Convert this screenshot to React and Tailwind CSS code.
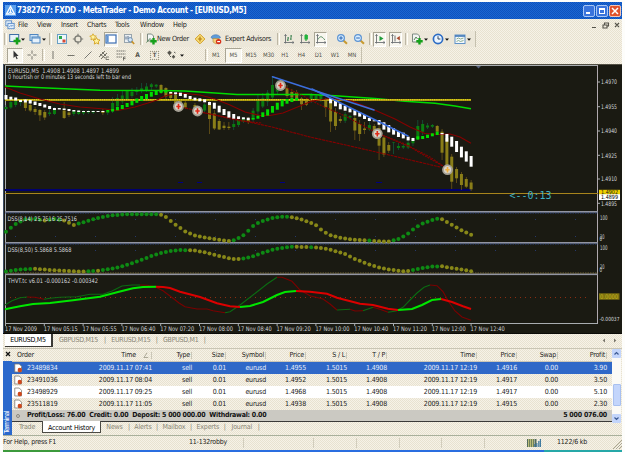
// File: App.jsx
// Description: MetaTrader terminal window with the EURUSD chart and the account history.

import React from 'react';

const BAR = 4.845;
const barX = (i) => 6 + i * BAR;

// [first bar, colour, [top, height] per bar]
const smoothed = [
  [0, '#ffffff', [[95, 4.5], [96.7, 3], [97.5, 3], [100, 2], [99.5, 3], [100, 3.5], [101.5, 3.5], [103, 3], [104.5, 3], [106, 3], [108, 2], [108, 1.5], [108.5, 1.5], [109, 2], [110, 1.5], [110.5, 1.5], [111, 1], [111, 1], [111, 1], [111, 1], [111, 1]]],
  [21, '#00dc00', [[110, 1.7], [109, 2.5], [107, 3.3], [105, 4], [103, 4], [101, 4.3], [98.5, 4.3], [96, 5], [94, 5], [92, 4.7], [91, 4], [90.3, 2.7], [90.7, 2]]],
  [34, '#ffffff', [[92, 1.5], [92.3, 2], [92.7, 3.3], [94, 3.7], [96, 3], [97.7, 2.7], [98.3, 3], [99.3, 3], [102, 3], [102.7, 6], [105.7, 6.7], [109, 6], [111.3, 6.3], [114, 4.7], [116.3, 2.7], [117.3, 2], [117.7, 2.3]]],
  [51, '#00dc00', [[118, 1.3], [115.7, 3], [112.3, 4.7], [109.3, 6.3], [106, 6.7], [102.7, 7], [99.7, 6.7], [99, 4.7], [98, 4], [98, 2.7]]],
  [67, '#ffffff', [[98.3, 5], [100.3, 6], [103.3, 6], [106, 4.7], [108.3, 4], [110.3, 5], [112.3, 4.3], [115, 4], [118, 3], [120.3, 1], [120, 4.7], [122.3, 7.3], [125, 7.3], [128.3, 6.3], [131, 6], [132.7, 5.7], [136.7, 3.7], [138, 3]]],
  [85, '#00dc00', [[136.3, 3.3], [136, 3], [134.7, 3.3], [133.3, 3], [131.7, 3.3]]],
  [90, '#ffffff', [[133, 1.3], [134, 7.7], [136.7, 10], [141, 11], [146.7, 10.7], [151.3, 10.3], [156, 10.7]]],
];

// [bar, open, close, high, low, up]
const candles = [
  [0, 107, 109, 105, 110, 1], [1, 102, 107.5, 101, 109, 1], [2, 100.5, 105, 99, 107, 1], [3, 100, 102.5, 99, 106, 1],
  [4, 101.5, 108, 100, 111, 0], [5, 105, 110.5, 102, 112, 0], [6, 109, 112, 107, 115, 0], [7, 110, 115.3, 109, 121, 0],
  [8, 112, 117.5, 110, 120, 0], [9, 112.5, 114, 109, 116, 1], [10, 109, 114, 107, 115, 1], [12, 110.5, 118, 102, 119, 0],
  [13, 112.5, 115, 111, 117, 0], [14, 111, 114, 110, 116, 1], [15, 111, 114, 110, 115, 1], [16, 111, 113.3, 110, 115, 1],
  [17, 111, 112.5, 110, 114, 1], [18, 111, 112.5, 110, 114, 1], [20, 111, 113, 109, 115, 0], [21, 111, 113, 110, 115, 1],
  [22, 103, 111, 97, 113, 1], [23, 98, 106.5, 94, 110, 1], [24, 95.5, 101.5, 91, 104, 1], [25, 91, 99, 90, 101, 1],
  [26, 92, 96, 88, 98, 1], [27, 90, 92, 87, 95, 1], [28, 88.3, 90.7, 83, 93, 1], [29, 86.5, 90, 83, 92, 1],
  [30, 84.3, 87, 83, 90, 1], [31, 84.7, 86.5, 84, 88, 1], [32, 85, 92, 84, 94, 0], [33, 88, 96.5, 87, 101, 0],
  [34, 93, 98, 91, 101, 0], [35, 95, 103, 93, 106, 0], [36, 101, 108, 99, 110, 0], [37, 102.7, 107.5, 100, 109, 0],
  [39, 105, 107, 103, 109, 0], [41, 104.5, 110.5, 103, 113, 1], [42, 103.5, 119, 100, 134, 0], [43, 113.5, 128.5, 110, 130, 0],
  [44, 121, 129.5, 119, 130, 0], [45, 125.7, 128, 122, 130, 0], [46, 126.7, 128, 122, 130, 0], [47, 124, 127, 119, 130, 1],
  [48, 120, 125, 118, 127, 1], [49, 119, 121.5, 117, 123, 1], [50, 119.7, 122, 117, 124, 0], [51, 110.7, 120, 108, 122, 1],
  [52, 100, 111.5, 95, 117, 1], [53, 98.3, 106.5, 93, 108, 1], [54, 92.7, 101.5, 90, 106, 1], [55, 85, 97.5, 76, 99, 1],
  [56, 82.5, 91.5, 80, 94, 1], [58, 88, 96, 85, 98, 0], [59, 92, 97.5, 89, 99, 0], [60, 92.5, 99, 90, 100, 0],
  [61, 98.5, 104.3, 97, 110, 0], [62, 100.5, 104.7, 98, 106, 0], [63, 95, 100, 93, 103, 1], [64, 96, 99.3, 95, 102, 1],
  [65, 95.5, 99, 94, 102, 1], [66, 99, 107.5, 98, 117, 0], [67, 103, 121.5, 101, 132, 0], [68, 112, 126, 108, 130, 0],
  [69, 119, 121, 116, 123, 0], [70, 114.3, 120.7, 112, 123, 1], [71, 116, 117.5, 115, 119, 1], [72, 118, 130.5, 115, 140, 0],
  [73, 124, 134, 120, 141, 0], [74, 128.5, 130, 122, 134, 0], [75, 125, 129.5, 121, 131, 1], [76, 126, 131.5, 124, 134, 0],
  [77, 128, 145.7, 120, 160, 0], [78, 137.5, 154.5, 135, 157, 0], [79, 145, 150.7, 142, 153, 0], [80, 142, 142.5, 142, 154, 1],
  [81, 146, 148, 143, 150, 1], [82, 146, 147.5, 143, 149, 1], [83, 142.7, 147.5, 139, 149, 1], [84, 140, 143.3, 137, 146, 1],
  [85, 126, 139, 120, 140, 1], [86, 124, 131.7, 120, 135, 1], [87, 125.5, 127.5, 123, 129, 1], [88, 125, 126.7, 124, 128, 1],
  [89, 126, 131.7, 125, 134, 0], [90, 131.7, 152.7, 129, 160, 0], [91, 138, 171.7, 136, 175, 0], [92, 156.7, 181.7, 154, 189, 0],
  [93, 169, 178.3, 167, 183, 0], [94, 174, 185, 172, 190, 0], [95, 179, 186.7, 177, 188, 0], [96, 182.5, 189.3, 180, 191, 0],
];

const dss1 = [[6, 231.7], [15, 224.3], [25, 219.3], [35, 219], [45, 220.5], [54, 219], [64, 220.5], [73.5, 225], [83, 222.3], [98, 218], [112, 215.3], [127, 214.3], [160, 214.3], [165.5, 216.7], [175, 224.3], [185, 231.3], [195, 235.5], [209, 238.3], [223, 240.3], [228, 241], [233, 240.7], [238, 238.3], [243, 235.7], [248, 231], [252, 226.7], [257, 223.3], [262, 221.3], [272, 218], [282, 216.7], [291, 217], [301, 219.3], [311, 223], [316, 225.3], [320, 229], [325, 232.3], [330, 235], [340, 237.7], [354, 239.7], [388, 241.7], [398, 239.3], [403, 236.7], [408, 233.7], [412, 230.3], [417, 226.7], [422, 223.7], [432, 220], [437, 218.7], [442, 219.3], [451, 224.3], [461, 230], [471, 234.7]];
const dss1Falling = [[44, 49], [60, 75], [160, 230], [290, 366], [371, 390], [440, 480]];
const dss2 = [[6, 271.5], [20, 269.5], [35, 268.7], [50, 270], [80, 271.5], [97, 271], [107, 269.5], [120, 267], [130, 264], [140, 260.5], [150, 256.5], [160, 253.3], [170, 251], [180, 250], [195, 250.5], [208, 253], [219, 256], [228, 258], [235, 259.3], [245, 258.3], [255, 255.7], [262, 253], [275, 249], [290, 246.7], [305, 247], [318, 247.5], [330, 249.5], [345, 254], [355, 259], [365, 263], [377, 267], [387, 269.3], [405, 271.5], [418, 269], [430, 266.7], [442, 266.3], [450, 267.7], [465, 270], [471, 271.3]];
const dss2Falling = [[33, 84], [95, 99], [186, 240], [294, 308], [313, 410], [440, 480]];

const valueAt = (points, x) => {
  const n = points.findIndex((p) => p[0] >= x);
  if (n === -1) return points[points.length - 1][1];
  if (n === 0) return points[0][1];
  const [x1, y1] = points[n - 1];
  const [x2, y2] = points[n];
  return y1 + ((y2 - y1) * (x - x1)) / (x2 - x1);
};

const Dots = ({ points, falling }) => (
  <g>
    {Array.from({ length: 97 }, (_, i) => {
      const x = barX(i);
      const down = falling.some(([a, b]) => x >= a && x <= b);
      return <circle key={i} cx={x} cy={valueAt(points, x)} r="2" fill={down ? '#878718' : '#0e8a14'} />;
    })}
  </g>
);

const thinLines = [
  ['#0b6b12', '5,305 12,300.7 20,297.7 27,297'],
  ['#7a0000', '27,297 35,297.3 44,299.3'],
  ['#0b6b12', '44,299.3 50,298.3 60,297.3 77,296.7 90,294.3 103,294.3 112,291 122,286 132,285 140,285'],
  ['#7a0000', '140,285 147,285.3 155,286.7 163,290.7 173,298.3 179,303 185,306.7 197,309 207,309 213,310.7 225,312.7'],
  ['#0b6b12', '225,312.7 230,311.7 240,305 253,295 267,284 277,277.3'],
  ['#7a0000', '277,277.3 282,277.3 292,281.3 300,290 310,295.7 323,299 330,304 337,310'],
  ['#0b6b12', '337,310 350,309.3'],
  ['#7a0000', '350,309.3 355,311 363,310.7'],
  ['#0b6b12', '363,310.7 373,307.3'],
  ['#7a0000', '373,307.3 380,309.3 388,312.3'],
  ['#0b6b12', '388,312.3 396,311 403,307.3 411,299 417,293 424,287.3 430,285'],
  ['#7a0000', '430,285 437,285.7 443,291.7 449,302.3 455,311 462,317 471,320.3'],
];

const thickLines = [
  ['#00e600', '5,309.3 20,306.3 33,304 50,303 73,300.3 100,296.7 117,292.3 133,288.3 143,287 156,286.7'],
  ['#dc0000', '156,286.7 163,287 170,288 180,291.7 200,297 217,303.3 230,306.3 240,307'],
  ['#00e600', '240,307 250,306 263,302 277,295 285,292 296,291'],
  ['#dc0000', '296,291 310,291.7 327,293.7 337,297.7 360,303.7 373,305 388,308.7 398,310'],
  ['#00e600', '398,310 412,309 422,305 432,300 441,299'],
  ['#dc0000', '441,299 452,302 463,306.3 471,309'],
];

const times = ['2009', '05:15', '05:55', '06:40', '07:20', '08:00', '08:40', '09:20', '10:00', '10:40', '11:20', '12:00', '12:40'];
const prices = [['1.4970', 82], ['1.4955', 106.7], ['1.4940', 131], ['1.4925', 155.3], ['1.4910', 179], ['1.4895', 203.3]];
const marks = [[178.5, 106.5], [197.5, 111], [280.5, 85.5], [377.3, 133.7], [447.5, 169.7]];

const Label = ({ x, y, w, children, fill = '#d6d8dc', size = 6.3 }) => (
  <text x={x} y={y} fontSize={size} fill={fill} textLength={w} lengthAdjust="spacingAndGlyphs" xmlSpace="preserve">
    {children}
  </text>
);

const Chart = () => (
  <svg viewBox="3 64 619 270" className="block h-[270px] w-[619px] shrink-0 font-['DejaVu_Sans_Condensed','DejaVu_Sans',sans-serif]">
    <rect x="3" y="64" width="619" height="270" fill="#1a1a12" />
    <rect x="3" y="63.5" width="619" height="1" fill="#8a8474" />
    <rect x="3" y="64" width="1" height="270" fill="#3a4a62" />
    <rect x="5" y="65" width="593" height="1" fill="#a9adb0" />
    <rect x="5" y="65" width="1" height="259" fill="#a9adb0" />
    <rect x="597" y="65" width="1" height="259" fill="#b0a9ae" />

    {/* pane separators */}
    {[211, 242, 273.5].map((y, i) => (
      <g key={y}>
        <rect x="5" y={y} width="593" height="1.6" fill="#9295a2" />
        <line x1="5" x2="598" y1={i === 2 ? y - 0.5 : y + 2} y2={i === 2 ? y - 0.5 : y + 2} stroke={i === 2 ? '#8c7a3c' : '#34519a'} strokeWidth="0.8" strokeDasharray="1.5 1" />
      </g>
    ))}
    <rect x="5" y="323" width="593" height="1" fill="#a9adb0" />
    <rect x="3" y="333" width="619" height="1" fill="#0b0b08" />

    {/* price lines */}
    <rect x="5" y="189" width="466" height="2" fill="#00006e" />
    <rect x="5" y="193" width="593" height="1" fill="#a8851c" />
    <path d="M178 182.5h5M197 182.5h5M280 182.5h5M376 182.5h6" stroke="#000080" strokeWidth="1.2" />

    <g>
      {candles.map(([i, open, close, high, low, up]) => (
        <g key={i} fill={up ? '#0a7c10' : '#8a7e18'}>
          <rect x={barX(i) - 0.4} y={high} width="0.8" height={low - high} fill={up ? '#14543c' : '#6b5518'} />
          <rect x={barX(i) - 1.5} y={open} width="3" height={close - open} />
        </g>
      ))}
    </g>

    <polyline points="5,86 30,87.3 70,89 100,90.3 135,90.5 160,90.5 185,91 215,93 237,94.5 310,94.5 335,95.7 375,98.5 405,101.3 435,103.3 455,106 471,108.7" fill="none" stroke="#00dc00" strokeWidth="1.4" />
    <rect x="5" y="99" width="466" height="2" fill="#a08c10" />
    <line x1="5" x2="471" y1="99.8" y2="99.8" stroke="#f0e61c" strokeWidth="1.1" strokeDasharray="1.4 0.8" />
    <g fill="none" stroke="#860000" strokeWidth="1.1">
      <polyline points="5,87 20,93 40,99 60,104 80,107 105,109 118,110.5 135,107 148,103 157,100 165,96 175,93.5 185,93.5 200,95 215,99 230,105 245,112 260,115.5 270,115.5 283,113 300,106 312,101 330,98.5 352,101 374,109.7 395,119 410,127 425,133.5 440,134.5 450,134 460,137 471,143.3" />
      <polyline points="178,106 205,113 235,119 272,127 310,137 350,146 385,154 440,167" strokeDasharray="3 0.7" />
      <polyline points="197,111 240,121 262,123" strokeDasharray="2 1" />
      <polyline points="285,87 305,97 318,104 345,116 377,133 410,147 446,168" strokeDasharray="2 1" />
      <polyline points="377,133 405,144 430,157 446,168" strokeDasharray="2 1" />
    </g>

    {smoothed.map(([start, color, bars]) =>
      bars.map(([top, height], k) => (
        <rect key={start + k} x={barX(start + k) - 1.5} y={top} width="3" height={height} fill={color} />
      ))
    )}

    <g stroke="#3c6edc" strokeWidth="1.6" strokeLinecap="round">
      <line x1="272.5" y1="76.7" x2="374" y2="110" />
      <line x1="312" y1="89" x2="408" y2="136" />
    </g>

    {marks.map(([x, y]) => (
      <g key={x}>
        <circle cx={x} cy={y} r="5.4" fill="#a5a094" />
        <circle cx={x} cy={y} r="3.6" fill="#d9d4c8" />
        <path d={`M${x - 2.2} ${y}h4.4M${x} ${y - 2.8}v5.6`} stroke={x > 440 ? '#f0b040' : '#e02818'} strokeWidth="1.6" />
      </g>
    ))}

    {/* indicators */}
    <path d="M15 219.5h580M15 236.5h580M15 250.5h580" stroke="#26386c" strokeWidth="1" strokeDasharray="1 39" />
    <line x1="10" x2="590" y1="297.5" y2="297.5" stroke="#8c2c10" strokeWidth="1" strokeDasharray="1 4" />
    <Dots points={dss1} falling={dss1Falling} />
    <Dots points={dss2} falling={dss2Falling} />
    {thinLines.map(([color, points]) => (
      <polyline key={points} points={points} fill="none" stroke={color} strokeWidth="1.1" />
    ))}
    {thickLines.map(([color, points]) => (
      <polyline key={points} points={points} fill="none" stroke={color} strokeWidth="2" />
    ))}

    <Label x={8} y={73} w={111}>EURUSD,M5  1.4908 1.4908 1.4897 1.4899</Label>
    <Label x={8} y={79.3} w={123}>0 hourtish or 0 minutes 13 seconds left to bar end</Label>
    <Label x={7.5} y={221.3} w={69.5}>DSS(8,14) 25.7516 25.7516</Label>
    <Label x={7.5} y={252.3} w={64}>DSS(8,50) 5.5868 5.5868</Label>
    <Label x={8} y={282.5} w={90}>THVT.tc v6.01 -0.000162 -0.000342</Label>
    <text x="509.5" y="199" fontSize="10" fill="#3fb4c4" textLength="42" lengthAdjust="spacingAndGlyphs" className="font-['DejaVu_Sans_Mono','Liberation_Mono',monospace]">
      {'<--0:13'}
    </text>

    {/* price axis */}
    {prices.map(([text, y]) => (
      <g key={text}>
        <rect x="598" y={y - 0.5} width="2" height="1" fill="#a9adb0" />
        <Label x={601} y={y + 2.2} w={16}>{text}</Label>
      </g>
    ))}
    <rect x="599" y="189.8" width="21" height="5" fill="#f0d000" />
    <Label x={601} y={194.4} w={17} fill="#1a1a12" size={5.8}>1.4902</Label>
    <rect x="599" y="194.2" width="21" height="5.8" fill="#ffffff" />
    <Label x={601} y={199.2} w={17} fill="#000000" size={5.8}>1.4899</Label>
    <path d="M476 66h5l-2.5 2.5z" fill="#57627c" />
    <Label x={600} y={219.8} w={7.5}>100</Label>
    <Label x={600} y={238.8} w={4.5}>20</Label>
    <Label x={599.5} y={241} w={2.6}>0</Label>
    <Label x={600} y={250.3} w={7.5}>100</Label>
    <Label x={600} y={269} w={4.5}>20</Label>
    <Label x={599.5} y={271.5} w={2.6}>0</Label>
    <rect x="599" y="293.3" width="20.5" height="6.4" fill="#7f7410" />
    <Label x={600} y={298.8} w={18} fill="#c0b020">0.0000</Label>
    <Label x={599.5} y={321} w={20} size={5.6}>-0.00037</Label>

    {/* time axis */}
    {times.map((time, i) => (
      <g key={time}>
        <rect x={5 + i * 38.8} y="324" width="1" height="2" fill="#a9adb0" />
        <Label x={5 + i * 38.8} y={331} w={i === 0 ? 32 : 34}>{`17 Nov ${time}`}</Label>
      </g>
    ))}
  </svg>
);

const Icon = ({ children }) => (
  <svg viewBox="0 0 12 12" className="h-3 w-3 shrink-0" fill="none" strokeWidth="1">
    {children}
  </svg>
);

const Plus = () => <path d="M8.5 5v6.4M5.3 8.2h6.4" stroke="#16a01a" strokeWidth="2.4" />;

const Caret = () => (
  <span className="flex w-1 shrink-0 justify-center">
    <svg viewBox="0 0 4 3" className="h-[3px] w-1"><path d="M0 .5h4L2 2.8z" fill="#111" /></svg>
  </span>
);

const Grip = ({ className }) => (
  <span className={`flex shrink-0 items-center justify-center gap-px ${className}`}>
    <span className="h-3 w-px bg-[#bdb7a5]" />
    <span className="h-3 w-px bg-[#fffef8]" />
  </span>
);

const Tool = ({ className, pressed, children }) => (
  <span
    className={`flex shrink-0 items-center justify-center ${className} ${
      pressed ? 'h-[15px] border border-t-[#a9a594] border-l-[#a9a594] border-r-white border-b-white bg-[#f8f6ee]' : 'h-4'
    }`}
  >
    {children}
  </span>
);

const Axes = () => <path d="M2.5 1.5v9M1 9.5h10M1.5 3l1-1.5 1 1.5M9.5 8.5l1.5 1-1.5 1" stroke="#6c7074" strokeWidth=".9" />;

const MainToolbar = () => (
  <div className="flex h-4 w-[473px] shrink-0 items-center border-r border-[#c5c0ae] bg-[#ece7d9]">
    <Grip className="w-[5px]" />
    <Tool className="w-[13px]">
      <Icon><rect x=".7" y="1.5" width="9" height="7" fill="#e8f2fa" stroke="#3f6fa6" /><path d="M8 4.5v7M4.5 8h7" stroke="#16a01a" strokeWidth="2.6" /></Icon>
    </Tool>
    <Caret />
    <Tool className="ml-[3px] w-[14px]">
      <Icon><rect x="1" y="1.5" width="8" height="6" fill="#cfe4f6" stroke="#4f86c0" /><rect x="3" y="4" width="8" height="6" fill="#e6f2fc" stroke="#4f86c0" /><path d="M3 5h8" stroke="#4f86c0" /></Icon>
    </Tool>
    <Caret />
    <Grip className="ml-px w-[7px]" />
    <Tool className="w-[15px]">
      <Icon><rect x="1.5" y="1.5" width="9" height="9" fill="#eef6fb" stroke="#6aa0c4" /><path d="M3 3h3v3H3z" fill="#2aa84a" /><path d="M6.5 6.5h3v3h-3z" fill="#d84a34" /></Icon>
    </Tool>
    <Tool className="w-[17px]">
      <Icon><circle cx="6" cy="6" r="3.2" stroke="#7d7d76" strokeWidth="1.3" /><path d="M6 .8v3M6 8.2v3M.8 6h3M8.2 6h3" stroke="#7d7d76" strokeWidth="1.2" /></Icon>
    </Tool>
    <Tool className="w-[17px]">
      <Icon><path d="M4 .8l1 2 2.3.3-1.6 1.6.3 2.2-2-1-2 1 .3-2.2L.8 3.1 3 2.8z" fill="#fff3a0" stroke="#d2a01c" strokeWidth=".8" /><path d="M7.5 4.5l1.1 2.2 2.4.3-1.7 1.7.4 2.4-2.2-1.2-2.2 1.2.4-2.4L4 7l2.4-.3z" fill="#fff3a0" stroke="#d2a01c" strokeWidth=".9" /></Icon>
    </Tool>
    <Tool className="ml-px w-[14px]" pressed>
      <Icon><rect x="1" y="2" width="10" height="8" fill="#fff" stroke="#3c6eb4" strokeWidth="1.2" /><path d="M1.5 2.5h2.2v7H1.5z" fill="#5f93d2" /></Icon>
    </Tool>
    <Tool className="ml-px w-[20px]">
      <Icon><rect x="1.5" y="1.5" width="7" height="8" fill="#e9eef2" stroke="#98a4ac" /><path d="M3 3.5v3M5 3v3" stroke="#58708c" /><circle cx="7.2" cy="6.8" r="2.2" fill="#d4e6f6" stroke="#6d8cac" /><path d="M8.8 8.4l2.4 2.6" stroke="#c89228" strokeWidth="1.6" /></Icon>
    </Tool>
    <Grip className="w-[5px]" />
    <Tool className="w-[13px]">
      <Icon><path d="M2.5 1h4l2 2v5h-6z" fill="#f4f6f4" stroke="#7d8a80" /><path d="M1.5 9.5L5 5.5l2 2" stroke="#58885c" /><Plus /></Icon>
    </Tool>
    <span className="w-[35px] shrink-0 text-[7.2px] tracking-[-0.3px]">New Order</span>
    <Tool className="w-[15px]">
      <Icon><path d="M6 1.2L10.8 6 6 10.8 1.2 6z" fill="#fbe27c" stroke="#d09a20" /><path d="M6 3.5v5M3.8 6h4.4" stroke="#b47a10" strokeWidth="1.2" /></Icon>
    </Tool>
    <Tool className="w-[18px]">
      <Icon><path d="M1 4.5C2 1 9 .6 10.5 4.5L8 6H3z" fill="#5f9cd8" stroke="#3f76b4" strokeWidth=".6" /><path d="M3 5.5h6V9L6 11 3 9z" fill="#f2cf7a" stroke="#b48a3c" strokeWidth=".6" /><circle cx="8.6" cy="8.6" r="2.7" fill="#d8321c" /><path d="M7.2 8.6H10" stroke="#fff" strokeWidth="1.2" /></Icon>
    </Tool>
    <span className="w-[50px] shrink-0 text-[7.2px] tracking-[-0.3px]">Expert Advisors</span>
    <Grip className="w-[6px]" />
    <Tool className="w-[15px]"><Icon><Axes /><path d="M5 4v4M4 7h1M5 5h1M8 2v5M7 6h1M8 3h1" stroke="#3d8250" /></Icon></Tool>
    <Tool className="ml-px w-[15px]"><Icon><Axes /><path d="M7 1v7" stroke="#188828" /><path d="M5.5 2h3.4v4.5H5.5z" fill="#22b43c" /></Icon></Tool>
    <Tool className="ml-0.5 w-[13px]" pressed><Icon><Axes /><path d="M3 6.5C5 2.5 7 3 9.8 7" stroke="#5c9068" /></Icon></Tool>
    <Tool className="ml-[7px] w-4"><Icon><path d="M7.5 7.5l3.5 3.3" stroke="#c89a30" strokeWidth="2" /><circle cx="5" cy="5" r="3.4" fill="#d7ecff" stroke="#5d94d2" strokeWidth="1.2" /><path d="M3.2 5h3.6M5 3.2v3.6" stroke="#2664b4" /></Icon></Tool>
    <Tool className="w-[17px]"><Icon><path d="M7.5 7.5l3.5 3.3" stroke="#c89a30" strokeWidth="2" /><circle cx="5" cy="5" r="3.4" fill="#d7ecff" stroke="#5d94d2" strokeWidth="1.2" /><path d="M3.2 5h3.6" stroke="#2664b4" /></Icon></Tool>
    <Grip className="w-[6px]" />
    <Tool className="w-[13px]" pressed><Icon><Axes /><path d="M5.5 3l4 2.5-4 2.5z" fill="#1f9c3a" /></Icon></Tool>
    <Tool className="ml-[3px] w-[13px]" pressed><Icon><Axes /><path d="M5 2.5v6" stroke="#6c7074" /><path d="M9.8 3v4.4L6.5 5.2z" fill="#a8482c" /></Icon></Tool>
    <Grip className="w-2" />
    <Tool className="w-[14px]"><Icon><path d="M1.5 1h5l2 2v6h-7z" fill="#f1f3f1" stroke="#7d8a80" /><path d="M3 7l2-3 1.5 2" stroke="#58885c" /><Plus /></Icon></Tool>
    <Caret />
    <Tool className="ml-[3px] w-[14px]"><Icon><circle cx="6" cy="6" r="4.6" fill="#eaf4ff" stroke="#2c6cc4" strokeWidth="1.7" /><path d="M6 3.2V6h2.4" stroke="#33475f" /></Icon></Tool>
    <Caret />
    <Tool className="ml-[3px] w-[15px]"><Icon><rect x="1" y="2" width="10" height="8.5" fill="#f4f8fc" stroke="#5f92c8" /><path d="M1 3h10" stroke="#3f78b8" strokeWidth="1.6" /><path d="M2.5 6l2-1 2 1 3-1M2.5 8.5l2-1 2 1 3-1" stroke="#6f9c74" strokeWidth=".8" /></Icon></Tool>
    <Caret />
  </div>
);

const DrawToolbar = () => (
  <div className="flex h-4 w-[359px] shrink-0 items-center border-r border-[#c5c0ae] text-[6px] tracking-[-0.1px] text-[#55544c]">
    <Tool className="ml-1 w-4" pressed><Icon><path d="M4.5 1.5v7.4l1.8-1.6 1.3 3 1.1-.5-1.3-2.9h2.2z" fill="#333" /></Icon></Tool>
    <Tool className="w-[18px]"><Icon><path d="M6 1.5v3.3M6 7.2v3.3M1.5 6h3.3M7.2 6h3.3" stroke="#76756c" /></Icon></Tool>
    <Grip className="w-[5px]" />
    <Tool className="w-[13px]"><Icon><path d="M6 2v8" stroke="#76756c" /></Icon></Tool>
    <Tool className="ml-[3px] w-[17px]"><Icon><path d="M2.5 6.5h7" stroke="#76756c" /></Icon></Tool>
    <Tool className="w-[17px]"><Icon><path d="M2.5 9.5l7-7" stroke="#76756c" /></Icon></Tool>
    <Tool className="w-[16px]"><Icon><path d="M1 8l6-6M3 10l6-6M2 5l5 4M4 3l4 4" stroke="#66655c" strokeWidth=".9" /><path d="M8 8h3M8 10.5h3M8 8v2.5" stroke="#66655c" strokeWidth=".8" /></Icon></Tool>
    <Tool className="w-[17px]"><Icon><path d="M1.5 2h9M1.5 5h9M1.5 8h6" stroke="#76756c" strokeDasharray="1.5 .5" /><path d="M8.5 8v3.5M8.5 8h2M8.5 9.6h2" stroke="#55544c" strokeWidth=".8" /></Icon></Tool>
    <Tool className="w-[17px] text-[6.6px] font-bold">A</Tool>
    <Tool className="w-[17px]"><span className="flex h-[9px] w-[9px] items-center justify-center border border-dotted border-[#999585] text-[6px] font-bold">T</span></Tool>
    <Tool className="ml-px w-4"><Icon><path d="M3.5 1.5l2.3 2.3-2.3 2.4-2.3-2.4zM7.5 5.8l1.8 2-1.8 2-1.8-2z" fill="#55544c" /><path d="M5 8l-1.5-1.5M8 3l1.5 1" stroke="#55544c" /></Icon></Tool>
    <Caret />
    <Grip className="ml-[20px] w-[5px]" />
    <Tool className="w-[14px]">M1</Tool>
    <Tool className="ml-[2px] w-[17px]" pressed>M5</Tool>
    <Tool className="w-[18px]">M15</Tool>
    <Tool className="w-[17px]">M30</Tool>
    <Tool className="w-4">H1</Tool>
    <Tool className="w-[17px]">H4</Tool>
    <Tool className="w-[17px]">D1</Tool>
    <Tool className="w-4">W1</Tool>
    <Tool className="w-[18px]">MN</Tool>
  </div>
);

const TitleBar = () => (
  <div className="flex h-[17px] shrink-0 items-center bg-[repeating-conic-gradient(#0f52bd_0_25%,#1a66d2_0_50%)] bg-[length:2px_2px] pl-0.5 text-white">
    <svg viewBox="0 0 12 12" className="h-[11px] w-[11px]">
      <rect width="12" height="12" fill="#5aa0ee" />
      <path d="M6 1.5L10.5 10h-9z" fill="none" stroke="#fff" strokeWidth="1.3" /><path d="M6 4v5M3 10l3-3 3 3" fill="none" stroke="#fff" />
    </svg>
    <h1 className="ml-[1px] font-['DejaVu_Sans_Condensed','DejaVu_Sans',sans-serif] text-[8.1px] font-bold whitespace-pre tracking-[-0.37px]">
      7382767: FXDD - MetaTrader - Demo Account - [EURUSD,M5]
    </h1>
    <div className="mr-px ml-auto flex gap-px">
      <span className="flex h-3 w-3 items-end rounded-[2px] border border-[#a8c6f4] bg-[#3a74dc] p-0.5"><span className="h-0.5 w-1 bg-white" /></span>
      <span className="flex h-3 w-3 rounded-[2px] border border-[#a8c6f4] bg-[#3a74dc] p-[2px]"><span className="flex-1 border border-t-2 border-white" /></span>
      <span className="flex h-3 w-3 items-center justify-center rounded-[2px] border border-[#f4c4b4] bg-[#e0522c]">
        <svg viewBox="0 0 8 8" className="h-2 w-2"><path d="M1 1l6 6M7 1L1 7" stroke="#fff" strokeWidth="1.5" /></svg>
      </span>
    </div>
  </div>
);

const MenuBar = () => (
  <div className="flex h-3 shrink-0 items-center text-[7.2px] tracking-[-0.28px]">
    <svg viewBox="0 0 12 12" className="ml-0.5 h-[10px] w-[10px]" fill="#e3effb" stroke="#4e83c4">
      <rect x="1" y="1" width="7" height="6" /><rect x="3.5" y="4" width="7.5" height="6.5" /><path d="M5 8.5l2-2 1.5 1 1.5-1.5" fill="none" />
    </svg>
    <span className="ml-[3px] w-[19px]">File</span>
    <span className="w-6">View</span>
    <span className="w-[26px]">Insert</span>
    <span className="w-7">Charts</span>
    <span className="w-[25px]">Tools</span>
    <span className="w-[33px]">Window</span>
    <span>Help</span>
    <svg viewBox="0 0 32 8" className="mr-px ml-auto h-2 w-8" fill="none" stroke="#55534a">
      <path d="M3 6.5h4M14 4h4v3h-4zM15.5 4V2h4v3H18M26 2l4 4M30 2l-4 4" strokeWidth="1.1" />
    </svg>
  </div>
);

const orders = [
  ['23489834', '2009.11.17 07:41', 'sell', '0.01', 'eurusd', '1.4955', '1.5015', '1.4908', '2009.11.17 12:19', '1.4916', '0.00', '3.90'],
  ['23491036', '2009.11.17 08:04', 'sell', '0.01', 'eurusd', '1.4952', '1.5015', '1.4908', '2009.11.17 12:19', '1.4917', '0.00', '3.50'],
  ['23498929', '2009.11.17 09:25', 'sell', '0.01', 'eurusd', '1.4968', '1.5015', '1.4908', '2009.11.17 12:19', '1.4917', '0.00', '5.10'],
  ['23511819', '2009.11.17 11:05', 'sell', '0.01', 'eurusd', '1.4938', '1.5015', '1.4908', '2009.11.17 12:19', '1.4915', '0.00', '2.30'],
];
const headings = ['Time', 'Type', 'Size', 'Symbol', 'Price', 'S / L', 'T / P', 'Time', 'Price', 'Swap', 'Profit'];
const columns = 'grid shrink-0 grid-cols-[60px_80px_40px_34px_40px_40px_41px_40px_90px_40px_41px_49px] items-center pr-[3px]';

const History = () => (
  <div className="min-w-0 flex-1 text-[7px] tracking-[-0.19px] whitespace-nowrap">
    <div className={`${columns} h-[13px] border-b border-[#cbc7b8]`}>
      <span className="pl-[5px]">Order</span>
      {headings.map((heading, i) => (
        <span key={i} className="flex items-center justify-end border-r border-[#cbc7b8] pr-px">
          {heading}
          {i === 0 && (
            <svg viewBox="0 0 6 6" className="mr-px ml-[7px] h-1.5 w-1.5 shrink-0"><path d="M1 5.5L4 .8M.8 5.5h4.4" fill="none" stroke="#a5a190" strokeWidth=".9" /></svg>
          )}
        </span>
      ))}
    </div>
    {orders.map((order, n) => (
      <div key={order[0]} className={`${columns} h-3 ${n === 0 ? 'bg-[#2f68c8] text-[#e6edfa]' : n === 2 ? 'bg-white' : ''}`}>
        <span className="flex items-center">
          <svg viewBox="0 0 12 12" className="mr-1 ml-0.5 h-[10px] w-[9px]">
            <path d="M1 .7h6l3 3v7.6H1z" fill="#fff" stroke="#75726a" /><circle cx="7.7" cy="8.7" r="2.9" fill="#d0481c" />
          </svg>
          {order[0]}
        </span>
        {order.slice(1).map((cell, i) => (
          <span key={i} className="text-right">{cell}</span>
        ))}
      </div>
    ))}
    <div className="flex h-3 items-center border-b border-[#3a3a38] bg-[#cbc9c2] pr-[5px] text-[7px] font-bold text-[#111]">
      <span className="ml-1 h-1 w-1 rounded-full border border-[#8a8880]" />
      <span className="ml-[7px] tracking-[-0.24px] whitespace-pre">Profit/Loss: 76.00  Credit: 0.00  Deposit: 5 000 000.00  Withdrawal: 0.00</span>
      <span className="ml-auto tracking-[-0.2px]">5 000 076.00</span>
    </div>
    <div className="flex h-[13px] text-[#8a8777]">
      <span className="w-[30px] pt-0.5 text-center">Trade</span>
      <span className="-mt-px h-3 w-[59px] border-r border-b border-l border-[#4b4a44] bg-white pt-[3px] text-center leading-[8px] text-black">Account History</span>
      <span className="w-[27px] pt-0.5 text-center">News</span>
      <span className="pt-0.5">|</span>
      <span className="w-[26px] pt-0.5 text-center">Alerts</span>
      <span className="pt-0.5">|</span>
      <span className="w-[32px] pt-0.5 text-center">Mailbox</span>
      <span className="pt-0.5">|</span>
      <span className="w-[32px] pt-0.5 text-center">Experts</span>
      <span className="pt-0.5">|</span>
      <span className="w-[32px] pt-0.5 text-center">Journal</span>
      <span className="pt-0.5">|</span>
    </div>
  </div>
);

const ScrollBar = () => (
  <div className="flex h-[74px] w-[9px] shrink-0 flex-col items-center bg-[#fbfaf6]">
    <svg viewBox="0 0 9 9" className="h-[9px] w-[9px]"><rect width="9" height="9" rx="1" fill="#c3d5fb" /><path d="M2.5 5.5l2-2 2 2" fill="none" stroke="#3c5a94" strokeWidth="1.2" /></svg>
    <span className="mt-[26px] h-[22px] w-2 rounded-[1px] border border-[#a8c0f0] bg-[#c3d5fb]" />
    <svg viewBox="0 0 9 9" className="mt-auto h-[9px] w-[9px]"><rect width="9" height="9" rx="1" fill="#c3d5fb" /><path d="M2.5 3.5l2 2 2-2" fill="none" stroke="#3c5a94" strokeWidth="1.2" /></svg>
  </div>
);

const Terminal = () => (
  <div className="flex h-[87px] shrink-0 border-t border-[#c9c5b4]">
    <div className="flex w-[9px] shrink-0 flex-col items-center">
      <svg viewBox="0 0 6 6" className="mt-0.5 mb-1 h-[6px] w-[6px] shrink-0"><path d="M1 1l4 4M5 1L1 5" stroke="#111" strokeWidth="1.3" /></svg>
      <div className="flex w-full flex-1 items-end justify-center bg-[#2a68cc] pb-0.5">
        <span className="rotate-180 text-[7px] leading-[9px] tracking-[-0.5px] text-white [writing-mode:vertical-rl]">Terminal</span>
      </div>
    </div>
    <History />
    <ScrollBar />
    <span className="w-px shrink-0" />
  </div>
);

const App = () => (
  <div className="h-[452px] w-[625px] overflow-hidden bg-[#fdfdfb] pt-0.5 pr-[3px] pl-[3px] font-['DejaVu_Sans_Condensed','DejaVu_Sans',sans-serif] leading-none text-[#1c1c1a]">
    <div className="flex h-[450px] w-[619px] flex-col bg-[repeating-conic-gradient(#e8e2d0_0_25%,#f6f2e8_0_50%)] bg-[length:2px_2px]">
      <TitleBar />
      <MenuBar />
      <MainToolbar />
      <DrawToolbar />
      <div className="h-px shrink-0" />
      <Chart />
      <div className="flex h-[14px] shrink-0 items-start text-[7px] tracking-[-0.28px] text-[#8a8777]">
        <span className="ml-0.5 h-[13px] w-[48px] border-r-2 border-b border-[#3c3b36] bg-white pt-[3px] text-center text-black">EURUSD,M5</span>
        <span className="w-[51px] pt-[3px] text-center">GBPUSD,M15</span>
        <span className="pt-[3px]">|</span>
        <span className="w-[50px] pt-[3px] text-center">EURUSD,M15</span>
        <span className="pt-[3px]">|</span>
        <span className="w-[46px] pt-[3px] text-center">GBPUSD,M1</span>
        <span className="pt-[3px]">|</span>
        <svg viewBox="0 0 16 5" className="mt-1 mr-1 ml-auto h-[5px] w-4" fill="#77746a"><path d="M3 .5v4L.8 2.5zM12 .5v4l2.2-2z" /></svg>
      </div>
      <Terminal />
      <div className="flex h-[15px] shrink-0 items-center border-t border-[#a9b09c] pb-px text-[7px] tracking-[-0.2px]">
        <span className="w-[186px]">For Help, press F1</span>
        <span className="w-[54px]">11-132robby</span>
        <span className="h-2.5 w-[70px] border-l border-[#d2cdbc]" />
        <span className="h-2.5 w-[43px] border-l border-[#d2cdbc]" />
        <span className="h-2.5 w-[43px] border-l border-[#d2cdbc]" />
        <span className="h-2.5 w-[42px] border-l border-[#d2cdbc]" />
        <span className="h-2.5 w-[43px] border-l border-[#d2cdbc]" />
        <span className="h-2.5 w-[43px] border-l border-[#d2cdbc]" />
        <svg viewBox="0 0 14 8" className="h-2 w-[14px]"><path d="M.8 0v8M2.8 0v8M4.8 0v8M6.8 0v8M8.8 0v8" stroke="#2c4c3c" strokeWidth="1.2" /><path d="M9.8 4v4M11.8 2v6M13.4 0v8M7.8 5v3" stroke="#3f7aa0" strokeWidth="1.2" /><path d="M1.8 0v8M3.8 0v8M5.8 0v8" stroke="#d0cc60" strokeWidth=".8" /></svg>
        <span className="ml-4">1122/6 kb</span>
        <svg viewBox="0 0 10 10" className="mt-auto ml-auto h-[10px] w-[10px]"><path d="M1 10l9-9M4 10l6-6M7 10l3-3" stroke="#aaa692" /></svg>
      </div>
      <div className="flex h-0.5 shrink-0">
        <span className="w-[57px] bg-[#3c9a3c]" />
        <span className="flex-1 bg-[#2a6ee0]" />
        <span className="w-[78px] bg-[#26a8a8]" />
      </div>
    </div>
  </div>
);

export default App;
